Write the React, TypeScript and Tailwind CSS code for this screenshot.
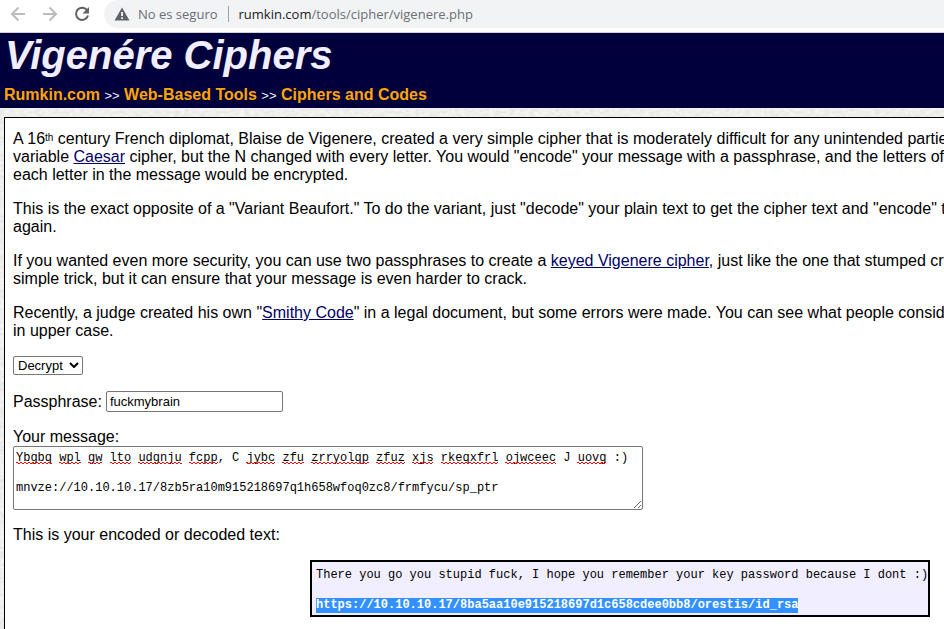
import type { ReactNode } from "react";

const message = `Ybgbq wpl gw lto udgnju fcpp, C jybc zfu zrryolqp zfuz xjs rkeqxfrl ojwceec J uovg :)

mnvze://10.10.10.17/8zb5ra10m915218697q1h658wfoq0zc8/frmfycu/sp_ptr
`;

// Lengths of the words on the first line of the message; single letters are not underlined.
const words: { length: number; after: number; wrong: boolean }[] = message
  .split("\n")[0]
  .split(" ")
  .map((word) => {
    const letters = word.replace(/[^A-Za-z]/g, "").length;
    return { length: letters, after: word.length - letters + 1, wrong: letters > 1 };
  });

function Squiggles() {
  return (
    <div
      aria-hidden="true"
      className="pointer-events-none absolute top-4 left-[3px] flex font-['Liberation_Mono',monospace] text-[12px]"
    >
      {words.map((word, i) => (
        <span
          key={i}
          className={
            word.wrong
              ? "h-[3px] bg-[linear-gradient(45deg,transparent_35%,#f00000_35%,#f00000_65%,transparent_65%),linear-gradient(-45deg,transparent_35%,#f00000_35%,#f00000_65%,transparent_65%)] bg-[length:4px_2px,4px_2px] bg-[position:0_0,2px_0] bg-repeat-x"
              : "h-[3px]"
          }
          style={{ width: `${word.length}ch`, marginRight: `${word.after}ch` }}
        />
      ))}
    </div>
  );
}

function Paper() {
  return (
    <svg className="absolute inset-0 -z-10 h-full w-full" aria-hidden="true">
      <filter id="paper" x="0" y="0" width="100%" height="100%" colorInterpolationFilters="sRGB">
        <feTurbulence type="fractalNoise" baseFrequency="0.2 0.35" numOctaves="2" seed="4" />
        <feColorMatrix values="0.12 0 0 0 0.875  0.12 0 0 0 0.875  0.12 0 0 0 0.87  0 0 0 0 1" />
      </filter>
      <rect width="100%" height="100%" filter="url(#paper)" />
    </svg>
  );
}

function NavButton({ label, color, children }: { label: string; color: string; children: ReactNode }) {
  return (
    <button type="button" aria-label={label} className={`flex size-8 items-center justify-center ${color}`}>
      {children}
    </button>
  );
}

function BrowserBar() {
  return (
    <div className="flex h-[33px] items-start border-b border-[#d4d4d8] bg-white pl-[2px]">
      <div className="flex h-7 items-center">
        <NavButton label="Back" color="text-[#babcbe]">
          <svg viewBox="0 0 16 16" className="size-4" fill="none" stroke="currentColor" strokeWidth="2">
            <path d="M15 8H2.5M8.5 1.5 2 8l6.500 6.500" />
          </svg>
        </NavButton>
        <NavButton label="Forward" color="text-[#babcbe]">
          <svg viewBox="0 0 16 16" className="size-4" fill="none" stroke="currentColor" strokeWidth="2">
            <path d="M1 8h12.500M7.500 1.500 14 8l-6.500 6.500" />
          </svg>
        </NavButton>
        <NavButton label="Reload" color="text-[#5f6368]">
          <svg viewBox="0 0 16 16" className="size-4" fill="none" stroke="currentColor" strokeWidth="2">
            <path d="M13.300 4.500A6.100 6.100 0 1 0 14 9.500" />
            <path d="M15 1v6.500H8.500Z" fill="currentColor" stroke="none" />
          </svg>
        </NavButton>
      </div>
      <div className="ml-[6px] flex h-7 flex-1 items-center rounded-l-full bg-[#f1f3f4] pl-[10px] font-['Open_Sans','Noto_Sans',sans-serif] text-[13px] text-[#6b6f74]">
        <svg viewBox="0 0 16 14" className="h-[14px] w-4 shrink-0" aria-hidden="true">
          <path d="M8 0.500 15.500 13.500H0.500Z" fill="#5f6368" />
          <path d="M7.200 5h1.700v4H7.200zM7.200 10.300h1.700V12H7.200z" fill="#fff" />
        </svg>
        <span className="ml-2 whitespace-nowrap">No es seguro</span>
        <span className="mx-[10px] h-4 w-px bg-[#9aa0a6]" />
        <span className="whitespace-nowrap">
          <span className="text-[#202124]">rumkin.com</span>/tools/cipher/vigenere.php
        </span>
      </div>
    </div>
  );
}

function Crumb({ children }: { children: ReactNode }) {
  return (
    <a href="#" className="font-bold text-[#ffa500]">
      {children}
    </a>
  );
}

function CrumbSeparator() {
  return <span className="text-[13px] leading-none">&gt;&gt;</span>;
}

function TextLink({ children }: { children: ReactNode }) {
  return (
    <a href="#" className="text-[#000066] underline">
      {children}
    </a>
  );
}

export default function App() {
  return (
    <div className="relative isolate h-screen overflow-hidden font-['Liberation_Sans',Arial,sans-serif] text-[16px] leading-[18px] text-black">
      <Paper />
      <BrowserBar />
      <header className="h-[76px] border-b border-[#f0eeff] bg-[#00003c] px-1">
        <h1 className="pl-px text-[40px] leading-[44px] font-bold text-[#f0eeff] italic">Vigenére Ciphers</h1>
        <nav className="mt-[9px] text-[#f0eeff]">
          <Crumb>Rumkin.com</Crumb> <CrumbSeparator /> <Crumb>Web-Based Tools</Crumb> <CrumbSeparator />{" "}
          <Crumb>Ciphers and Codes</Crumb>
        </nav>
      </header>

      <main className="mt-2 ml-1 flex min-h-screen min-w-[1232px] flex-col gap-4 border border-black bg-white px-2 pt-3 whitespace-nowrap">
        <p>
          A 16<sup className="top-0 align-[3px] text-[10px] leading-none">th</sup> century French diplomat, Blaise de
          Vigenere, created a very simple cipher that is moderately difficult for any unintended parties
          <br />
          variable <TextLink>Caesar</TextLink> cipher, but the N changed with every letter. You would "encode" your
          message with a passphrase, and the letters of
          <br />
          each letter in the message would be encrypted.
        </p>
        <p>
          This is the exact opposite of a "Variant Beaufort." To do the variant, just "decode" your plain text to get
          the cipher text and "encode" the
          <br />
          again.
        </p>
        <p>
          If you wanted even more security, you can use two passphrases to create a{" "}
          <TextLink>keyed Vigenere cipher</TextLink>, just like the one that stumped cryptographers
          <br />
          simple trick, but it can ensure that your message is even harder to crack.
        </p>
        <p>
          Recently, a judge created his own "<TextLink>Smithy Code</TextLink>" in a legal document, but some errors
          were made. You can see what people considered
          <br />
          in upper case.
        </p>

        <div className="relative flex w-[70px]">
          <select
            aria-label="Operation"
            defaultValue="Decrypt"
            className="h-[19px] w-full appearance-none rounded-[2px] border border-[#767676] bg-white pl-1 text-[13px] leading-[17px]"
          >
            <option>Encrypt</option>
            <option>Decrypt</option>
          </select>
          <svg
            viewBox="0 0 10 6"
            className="pointer-events-none absolute top-[6px] right-1 h-[6px] w-[10px]"
            fill="none"
            stroke="#000"
            strokeWidth="2"
            aria-hidden="true"
          >
            <path d="M1 1l4 4 4-4" />
          </svg>
        </div>

        <div className="flex items-center gap-1">
          <label htmlFor="passphrase">Passphrase:</label>
          <input
            id="passphrase"
            type="text"
            defaultValue="fuckmybrain"
            className="h-[21px] w-[177px] rounded-[2px] border border-[#767676] bg-white px-[3px] text-[13px]"
          />
        </div>

        <div className="flex flex-col">
          <label htmlFor="message">Your message:</label>
          <div className="relative flex h-16 w-[630px]">
            <textarea
              id="message"
              spellCheck={false}
              defaultValue={message}
              className="h-full w-full resize overflow-hidden rounded-[2px] border border-[#767676] bg-white px-[2px] py-1 font-['Liberation_Mono',monospace] text-[12px] leading-[15px] whitespace-pre"
            />
            <Squiggles />
          </div>
        </div>

        <p>This is your encoded or decoded text:</p>

        <output className="mx-auto block w-[620px] border-2 border-black bg-[#f0eeff] px-1 pt-[6px] pb-[2px] font-['Liberation_Mono',monospace] text-[12px] leading-[15px]">
          There you go you stupid fuck, I hope you remember your key password because I dont :)
          <br />
          <br />
          <mark className="inline-block bg-[#3390ff] font-bold text-white">
            https://10.10.10.17/8ba5aa10e915218697d1c658cdee0bb8/orestis/id_rsa
          </mark>
        </output>
      </main>
    </div>
  );
}
